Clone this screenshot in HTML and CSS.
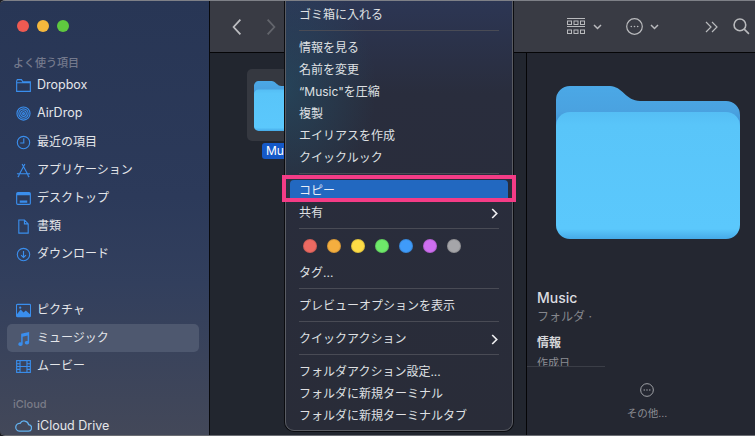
FILE: index.html
```html
<!DOCTYPE html>
<html lang="ja">
<head>
<meta charset="utf-8">
<title>Finder</title>
<link rel="stylesheet" href="styles.css">
</head>
<body>
<div class="window">
  <aside class="sidebar">
    <div class="traffic"><span class="dot red"></span><span class="dot yellow"></span><span class="dot green"></span></div>
    <div class="side-head first">よく使う項目</div>
    <div class="side-row lat up"><svg class="si" viewBox="0 0 16 14"><path d="M.7 2.200V13.300H15.300V3H7.200L5.800 .7H1.400Z M.7 4H15.300"/></svg>Dropbox</div>
    <div class="side-row lat up"><svg class="si" viewBox="0 0 16 16"><circle cx="8" cy="8" r="7"/><circle cx="8" cy="8" r="5"/><circle cx="8" cy="8" r="3"/><circle cx="8" cy="8" r="1"/></svg>AirDrop</div>
    <div class="side-row"><svg class="si" viewBox="0 0 16 16"><circle cx="8" cy="8" r="6.600"/><path d="M8.300 3.500V8.500H4.500"/></svg>最近の項目</div>
    <div class="side-row"><svg class="si" viewBox="0 0 16 16"><path d="M9.500 1 3 13M6.500 1l6.500 12M1 11.500h14M2 15l1.500-2M14 15l-1.500-2"/></svg>アプリケーション</div>
    <div class="side-row"><svg class="si" viewBox="0 0 16 14"><rect x=".7" y=".7" width="14.600" height="12.600" rx="1.200"/><path class="fill" d="M1 1h14v2.600H1zM4 9h8v2.500H4z"/></svg>デスクトップ</div>
    <div class="side-row"><svg class="si" viewBox="0 0 16 16"><path d="M3 1h6l4 4.200V15H3ZM9 1v4.200h4"/></svg>書類</div>
    <div class="side-row"><svg class="si" viewBox="0 0 16 16"><circle cx="8" cy="8" r="6.600"/><path d="M8 4.200v7M5.400 8.600 8 11.200l2.600-2.600"/></svg>ダウンロード</div>
    <div class="side-row gap"><svg class="si" viewBox="0 0 16 14"><rect x=".5" y=".5" width="15" height="13" rx="1"/><path class="fill" d="M1 11l4-5 3 3 2.500-2L15 11v2H1z"/><circle class="fill" cx="4.500" cy="4" r="1.200"/></svg>ピクチャ</div>
    <div class="side-row active"><svg class="si" viewBox="0 0 16 16"><path class="fill" d="M5.500 3 14 1v11.500a2.300 1.900 0 1 1-1.600-1.800V4.800L7.100 6v8a2.300 1.900 0 1 1-1.600-1.800Z"/></svg>ミュージック</div>
    <div class="side-row"><svg class="si" viewBox="0 0 16 14"><rect x=".7" y=".7" width="14.600" height="12.600"/><path d="M4.300 1v12M11.700 1v12M1 7h14M1 4h3M1 10h3M12 4h3M12 10h3"/></svg>ムービー</div>
    <div class="side-head cloud">iCloud</div>
    <div class="side-row lat"><svg class="si wide" viewBox="0 0 16 11"><path d="M4 10.300H12.300a3 3 0 0 0 .5-6A4.300 4.300 0 0 0 4.800 3 3.600 3.600 0 0 0 4 10.300Z"/></svg>iCloud Drive</div>
  </aside>

  <main class="main">
    <header class="toolbar">
      <svg class="nav" viewBox="0 0 10 16"><path d="M8 1.500 2 8l6 6.500"/></svg>
      <svg class="nav off" viewBox="0 0 10 16"><path d="M2 1.500 8 8l-6 6.500"/></svg>
      <div class="tools">
        <svg class="grid-ic" viewBox="0 0 18 17"><path d="M0 .5h18M0 8.500h18"/><rect x=".5" y="3" width="4" height="3.500"/><rect x="7" y="3" width="4" height="3.500"/><rect x="13.500" y="3" width="4" height="3.500"/><rect x=".5" y="12" width="4" height="3.500"/><rect x="7" y="12" width="4" height="3.500"/><rect x="13.500" y="12" width="4" height="3.500"/></svg>
        <svg class="chev" viewBox="0 0 9 6"><path d="M1 1l3.500 3.500L8 1"/></svg>
        <svg class="more-ic" viewBox="0 0 17 17"><circle cx="8.500" cy="8.500" r="7.800"/><circle class="fill" cx="5.300" cy="8.500" r=".8"/><circle class="fill" cx="8.500" cy="8.500" r=".8"/><circle class="fill" cx="11.700" cy="8.500" r=".8"/></svg>
        <svg class="chev" viewBox="0 0 9 6"><path d="M1 1l3.500 3.500L8 1"/></svg>
        <svg class="dbl" viewBox="0 0 13 12"><path d="M1 1l5 5-5 5M7 1l5 5-5 5"/></svg>
        <svg class="search" viewBox="0 0 16 16"><circle cx="6.500" cy="6.500" r="5.500"/><path d="M10.500 10.500 15 15"/></svg>
      </div>
    </header>
    <div class="panes">
      <section class="files">
        <div class="file-item">
          <div class="thumb"><svg class="folder-sm" viewBox="0 0 184 153"><use href="#folder"/></svg></div>
          <div class="file-label">Music</div>
        </div>
      </section>
      <section class="preview">
        <svg class="folder-lg" viewBox="0 0 184 153">
          <defs>
            <linearGradient id="fb" x1="0" y1="0" x2="0" y2="1"><stop offset="0" stop-color="#4ba8e6"/><stop offset=".5" stop-color="#4aa2e0"/><stop offset="1" stop-color="#3b8cd1"/></linearGradient>
            <linearGradient id="ff" x1="0" y1="0" x2="0" y2="1"><stop offset="0" stop-color="#55bef4"/><stop offset=".1" stop-color="#59c5f9"/><stop offset=".92" stop-color="#5bc8fc"/><stop offset="1" stop-color="#46aae8"/></linearGradient>
            <g id="folder">
              <path fill="url(#fb)" d="M0 14A14 14 0 0 1 14 0H54C66 0 70 15 84 15H170A14 14 0 0 1 184 29V50H0Z"/>
              <rect fill="url(#ff)" x="0" y="26" width="184" height="127" rx="14"/>
            </g>
          </defs>
          <use href="#folder"/>
        </svg>
        <div class="p-info">
          <div class="p-name">Music</div>
          <div class="p-kind">フォルダ ·</div>
          <div class="p-head">情報</div>
          <div class="p-clip"><div class="p-date">作成日</div></div>
        </div>
        <div class="p-more">
          <svg class="p-more-ic" viewBox="0 0 15 15"><circle cx="7.500" cy="7.500" r="6.800"/><circle class="fill" cx="4.500" cy="7.500" r=".7"/><circle class="fill" cx="7.500" cy="7.500" r=".7"/><circle class="fill" cx="10.500" cy="7.500" r=".7"/></svg>
          <div class="p-more-text">その他...</div>
        </div>
      </section>
    </div>
  </main>

  <nav class="menu">
    <div class="mi">ゴミ箱に入れる</div>
    <div class="sep"></div>
    <div class="mi">情報を見る</div>
    <div class="mi">名前を変更</div>
    <div class="mi">“Music"を圧縮</div>
    <div class="mi">複製</div>
    <div class="mi">エイリアスを作成</div>
    <div class="mi">クイックルック</div>
    <div class="sep"></div>
    <div class="mi hl">コピー</div>
    <div class="mi arrow">共有<svg class="mchev" viewBox="0 0 7 11"><path d="M1.200 1 5.700 5.500 1.200 10"/></svg></div>
    <div class="sep"></div>
    <div class="tags">
      <span class="tag t1"></span><span class="tag t2"></span><span class="tag t3"></span><span class="tag t4"></span><span class="tag t5"></span><span class="tag t6"></span><span class="tag t7"></span>
    </div>
    <div class="mi">タグ...</div>
    <div class="sep"></div>
    <div class="mi">プレビューオプションを表示</div>
    <div class="sep"></div>
    <div class="mi arrow">クイックアクション<svg class="mchev" viewBox="0 0 7 11"><path d="M1.200 1 5.700 5.500 1.200 10"/></svg></div>
    <div class="sep"></div>
    <div class="mi">フォルダアクション設定...</div>
    <div class="mi">フォルダに新規ターミナル</div>
    <div class="mi">フォルダに新規ターミナルタブ</div>
  </nav>
  <div class="callout"></div>
</div>
</body>
</html>
```

FILE: styles.css
```css
* { box-sizing: border-box; }
html, body { margin: 0; padding: 0; }
body {
  width: 755px;
  height: 436px;
  overflow: hidden;
  background: #1b1d24;
  font-family: Inter, "Noto Sans CJK JP", sans-serif;
  font-size: 12px;
  color: #e6e7ea;
}
svg { display: block; fill: none; stroke-width: 1.200; }
svg .fill { fill: currentColor; stroke: none; }

.window {
  position: relative;
  display: flex;
  width: 755px;
  height: 436px;
  overflow: hidden;
  border-top: 1px solid #7e8087;
  border-bottom: 1px solid #6b6d73;
  border-radius: 5px 0 0 5px;
}

/* sidebar */
.sidebar {
  flex: none;
  width: 210px;
  padding: 0 10px 0 7px;
  background: linear-gradient(180deg, #283655 0%, #2c3a5a 45%, #323f5d 65%, #434859 100%);
  border-right: 1px solid #08090c;
}
.traffic { display: flex; gap: 8px; padding: 19px 0 0 10px; height: 44px; }
.dot { width: 12px; height: 12px; border-radius: 50%; }
.red { background: #ee5a52; }
.yellow { background: #f5b83d; }
.green { background: #5fc83f; }
.side-head {
  height: 22px;
  line-height: 22px;
  padding-left: 6px;
  font-size: 11px;
  font-weight: 500;
  color: #74798c;
}
.side-head.first { height: 27px; padding-top: 7px; }
.side-head.cloud { height: 20px; margin-top: 12px; color: #7a7c88; line-height: 24px; }
.side-row {
  display: flex;
  align-items: center;
  height: 28px;
  padding-left: 9px;
  border-radius: 5px;
  font-size: 12px;
  line-height: 28px;
  color: #e4e6ea;
  white-space: nowrap;
}
.side-row.lat { font-size: 12.500px; }
.side-row.up { padding-bottom: 2px; }
.side-row.gap { margin-top: 28px; }
.side-row.active { background: #4e586f; }
.si { flex: none; width: 15px; height: 15px; margin-right: 6px; color: #3a8eed; stroke: #3a8eed; }
.si.wide { width: 17px; height: 12px; margin: 0 5px 0 -1px; stroke: #63b1ee; }

/* main */
.main { flex: 1; display: flex; flex-direction: column; min-width: 0; }
.toolbar {
  flex: none;
  display: flex;
  align-items: center;
  height: 52px;
  padding: 0 5px 0 21px;
  background: #393b44;
  border-bottom: 1px solid #050507;
}
.nav { width: 12px; height: 18px; margin-right: 22px; stroke: #bcbdc1; stroke-width: 1.600; }
.nav.off { stroke: #63656c; }
.tools { display: flex; align-items: center; margin-left: auto; color: #b9babd; }
.tools svg { stroke: #b9babd; }
.grid-ic { width: 18px; height: 17px; margin-right: 8px; stroke-width: 1; }
.chev { width: 9px; height: 6px; stroke-width: 1.500; }
.more-ic { width: 17px; height: 17px; margin: 0 7px 0 24px; }
.dbl { width: 13px; height: 12px; margin: 0 15px 0 46px; }
.search { width: 17px; height: 17px; stroke-width: 1.500; }
.panes { flex: 1; display: flex; min-height: 0; }
.files {
  flex: none;
  width: 317px;
  padding: 16px 0 0 37px;
  background: #22262f;
  border-right: 1px solid #050507;
}
.file-item { width: 72px; }
.thumb {
  width: 72px;
  height: 72px;
  padding: 12px 7px;
  border-radius: 5px;
  background: #353840;
}
.folder-sm { width: 60px; height: 50px; }
.file-label {
  display: inline-block;
  margin: 2px 0 0 15px;
  padding: 0 4px;
  height: 16px;
  line-height: 16px;
  border-radius: 3px;
  background: #1559c8;
  color: #fff;
  font-size: 12px;
  white-space: nowrap;
  width: 60px;
}
.preview {
  flex: 1;
  display: flex;
  flex-direction: column;
  background: #242731;
}
.folder-lg { flex: none; width: 184px; height: 153px; margin: 33px 0 0 29px; }
.p-info { flex: none; margin-top: 49px; padding-left: 10px; height: 77px; }
.p-name { font-size: 14px; font-weight: 500; line-height: 20px; color: #dcdde0; }
.p-kind { font-size: 12px; line-height: 18px; color: #85878d; }
.p-head { font-size: 12px; font-weight: 700; line-height: 24px; color: #d5d6d9; margin-top: 5px; }
.p-clip { height: 11px; overflow: hidden; width: 68px; margin-left: -10px; padding-left: 10px; border-bottom: 1px solid #3b3e47; box-sizing: content-box; }
.p-date { font-size: 11px; line-height: 16px; color: #8c8e94; }
.p-more { display: flex; flex-direction: column; align-items: center; padding: 18px 0 0 12px; }
.p-more-ic { width: 14px; height: 14px; stroke: #a8aaae; color: #a8aaae; stroke-width: 1; }
.p-more-text { margin-top: 10px; font-size: 10.500px; line-height: 14px; color: #8c8e94; }

/* context menu */
.menu {
  position: absolute;
  left: 285px;
  top: -21px;
  width: 228px;
  height: 451px;
  padding: 23px 4px 0;
  border: 1px solid #5a5c63;
  border-radius: 9px;
  background:
    radial-gradient(ellipse 90px 120px at 0 24%, rgba(36, 84, 110, .55), transparent),
    linear-gradient(180deg, #2d3859 0, #292d3d 25%, #292c38 100%);
  box-shadow: 0 0 0 1px #0b0c10;
}
.mi {
  display: flex;
  justify-content: space-between;
  align-items: center;
  height: 22px;
  padding: 0 10px 0 9px;
  border-radius: 4px;
  font-size: 12px;
  line-height: 22px;
  color: #dfe0e3;
  white-space: nowrap;
}
.mi.hl { background: #2268c0; color: #e9eef7; }
.sep { height: 1px; margin: 4px 9px 6px; background: #494b55; }
.mchev { width: 7px; height: 11px; stroke: #eeeef0; stroke-width: 1.700; }
.tags { display: flex; gap: 10px; padding: 4px 0 0 13px; height: 27px; }
.tag { width: 14px; height: 14px; border-radius: 50%; border: 1px solid rgba(0,0,0,.12); }
.t1 { background: #ec6a62; }
.t2 { background: #f4ae3f; }
.t3 { background: #fddc46; }
.t4 { background: #6ee96a; }
.t5 { background: #3f9bfa; }
.t6 { background: #ce6ff0; }
.t7 { background: #a5a5a9; }

.callout {
  position: absolute;
  left: 282px;
  top: 174px;
  width: 234px;
  height: 27px;
  border: 4px solid #f43c86;
}
```
